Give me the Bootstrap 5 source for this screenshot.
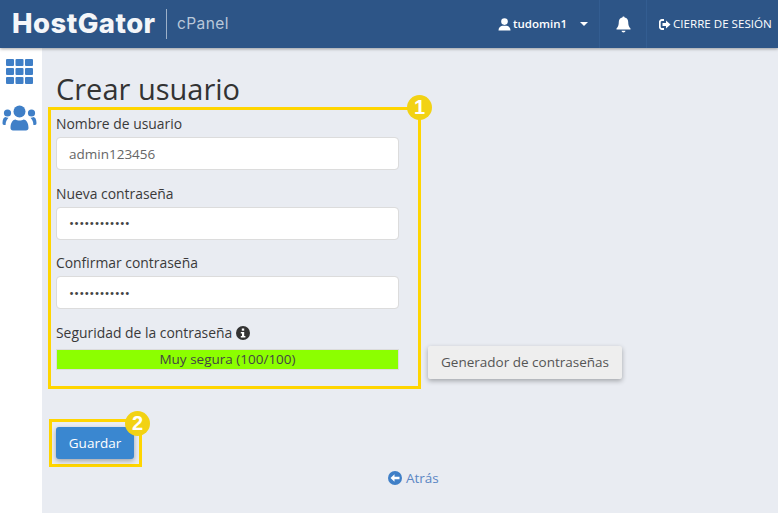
<!DOCTYPE html>
<html lang="es">
<head>
  <meta charset="UTF-8">
  <meta name="viewport" content="width=device-width, initial-scale=1">
  <title>Crear usuario</title>
  <link href="https://cdn.jsdelivr.net/npm/bootstrap@5.3.2/dist/css/bootstrap.min.css" rel="stylesheet">
  <style>
    html, body {
      height: 513px;
      overflow: hidden;
    }
    body {
      background-color: #e9ecf2;
      font-family: "Open Sans", sans-serif;
      font-size: 13.5px;
      color: #333;
    }
    .top-bar {
      height: 48px;
      background-color: #2d5587;
      box-shadow: 0 1px 3px rgba(0,0,0,0.35);
      position: relative;
      z-index: 2;
    }
    .brand-name {
      font-family: "Inter", sans-serif;
      font-weight: 800;
      font-size: 27.5px;
      letter-spacing: 0.45px;
      color: #f4f6f9;
      margin-left: 12px;
      width: 144px;
      line-height: 1;
    }
    .brand-rule {
      width: 1px;
      height: 30px;
      background: #9db1c9;
      margin-left: 10px;
    }
    .brand-sub {
      font-family: "Inter", sans-serif;
      font-size: 15.5px;
      color: #b9c8da;
      margin-left: 10px;
      letter-spacing: 0.4px;
    }
    .top-item {
      height: 48px;
      color: #fff;
      display: flex;
      align-items: center;
    }
    .top-user { width: 119px; padding-left: 18px; font-weight: 600; font-size: 11.5px; }
    .top-user svg { margin-right: 2px; }
    .top-bell { width: 48px; justify-content: center; border-left: 1px solid #335d91; border-right: 1px solid #335d91; }
    .top-exit { width: 131px; padding-left: 12px; font-size: 11.6px; font-weight: 500; white-space: nowrap; }
    .top-exit svg { margin-right: 2px; }
    .caret-mark {
      width: 0;
      height: 0;
      border-left: 4px solid transparent;
      border-right: 4px solid transparent;
      border-top: 4px solid #fff;
      margin-left: 13px;
    }
    .page-body {
      height: 465px;
    }
    .side-rail {
      width: 42px;
      background: #fff;
      padding-top: 11px;
      padding-left: 2px;
    }
    .side-rail svg { display: block; }
    .side-people { margin-top: 21px; }
    .main-pane {
      padding: 0 0 0 6px;
    }
    .page-title {
      font-family: "Open Sans", sans-serif;
      font-size: 29px;
      font-weight: 400;
      line-height: 40px;
      color: #333;
      margin: 21px 0 -2px 8px;
    }
    .mark-box {
      position: relative;
      border: 3px solid #ffd500;
    }
    .form-box {
      width: 373px;
      height: 282px;
      padding: 4px 19px 0 5px;
    }
    .save-box {
      width: 93px;
      height: 48px;
      margin: 30px 0 0 1px;
      padding: 5px 0 0 4px;
    }
    .num-dot {
      position: absolute;
      width: 25px;
      height: 25px;
      border-radius: 50%;
      background: #f2d214;
      color: #fff;
      font-family: "Liberation Sans", sans-serif;
      font-weight: 700;
      font-size: 20px;
      line-height: 25px;
      text-align: center;
    }
    .form-box .num-dot { top: -15px; right: -14px; }
    .save-box .num-dot { top: -11px; right: -11px; }
    .field-label {
      display: block;
      font-size: 13.9px;
      font-weight: 500;
      line-height: 19px;
      margin-bottom: 4px;
      color: #3a3a3a;
    }
    .field-wrap { margin-bottom: 13.5px; }
    .field-input {
      height: 33px;
      width: 343px;
      border: 1px solid #dcdcdc;
      border-radius: 4px;
      padding: 0 12px;
      font-family: "Open Sans", sans-serif;
      font-size: 13.5px;
      color: #666;
      box-shadow: none;
    }
    input[type=password].field-input { color: #444; }
    .strength-label { margin-bottom: 7.5px; }
    .info-mark { vertical-align: -2px; }
    .strength-track {
      width: 343px;
      height: 21px;
      background: #8cff00;
      border: 1px solid #dcdcdc;
      text-align: center;
      font-size: 13.5px;
      line-height: 18px;
      color: #444;
    }
    .gen-btn {
      background: #eee;
      color: #555;
      font-size: 13.5px;
      border: 0;
      border-radius: 2px;
      width: 194px;
      height: 33px;
      padding: 0;
      margin: 0 0 10px 7px;
      box-shadow: 0 2px 5px rgba(0,0,0,0.3);
    }
    .save-btn {
      background: #3a87d0;
      color: #fff;
      font-size: 13.5px;
      border: 0;
      border-radius: 3px;
      width: 78px;
      height: 32px;
      padding: 0;
      box-shadow: 0 2px 5px rgba(0,0,0,0.3);
    }
    .back-link {
      color: #5b86c4;
      font-size: 13.5px;
      text-decoration: none;
      margin: 1px 0 0 340px;
      line-height: 20px;
    }
  </style>
</head>
<body>

  <nav class="top-bar d-flex align-items-center justify-content-between">
    <div class="d-flex align-items-center">
      <span class="brand-name">HostGator</span>
      <span class="brand-rule"></span>
      <span class="brand-sub">cPanel</span>
    </div>
    <div class="d-flex">
      <div class="top-item top-user">
        <svg width="13" height="13" viewBox="0 0 13 13"><circle cx="6.5" cy="3.6" r="3.3" fill="#fff"/><path d="M0.5 12.5c0-3 1.8-4.4 3.8-4.8h4.4c2 .4 3.8 1.8 3.8 4.8z" fill="#fff"/></svg>
        tudomin1
        <span class="caret-mark"></span>
      </div>
      <div class="top-item top-bell">
        <svg width="15" height="17" viewBox="0 0 15 17"><path d="M7.5 0.5c.7 0 1.1.4 1.1 1 2.4.5 3.6 2.3 3.6 4.6 0 3.2.7 4.7 2.3 6.4v1H.5v-1c1.600-1.700 2.300-3.200 2.300-6.400 0-2.300 1.200-4.100 3.600-4.600 0-.6.400-1 1.100-1z" fill="#fff"/><path d="M5.600 14.800h3.800c0 1-.9 1.700-1.900 1.700s-1.900-.7-1.900-1.700z" fill="#fff"/></svg>
      </div>
      <div class="top-item top-exit">
        <svg width="12" height="11" viewBox="0 0 12 11" class="flex-shrink-0"><path d="M5 1H3a2.200 2.200 0 0 0-2.200 2.200v4.600A2.200 2.200 0 0 0 3 10h2" fill="none" stroke="#fff" stroke-width="1.800"/><path d="M3.500 4h3.500V1.500l4.500 4-4.500 4V7H3.500z" fill="#fff"/></svg>
        CIERRE DE SESIÓN
      </div>
    </div>
  </nav>

  <div class="page-body d-flex">
    <aside class="side-rail flex-shrink-0">
      <svg width="36" height="25" viewBox="0 0 36 25" class="ms-1" fill="#3f7fc7">
        <rect x="0" y="0" width="8" height="7" rx="1"/><rect x="9.500" y="0" width="8" height="7" rx="1"/><rect x="19" y="0" width="8" height="7" rx="1"/>
        <rect x="0" y="9" width="8" height="7" rx="1"/><rect x="9.500" y="9" width="8" height="7" rx="1"/><rect x="19" y="9" width="8" height="7" rx="1"/>
        <rect x="0" y="18" width="8" height="7" rx="1"/><rect x="9.500" y="18" width="8" height="7" rx="1"/><rect x="19" y="18" width="8" height="7" rx="1"/>
      </svg>
      <svg width="36" height="26" viewBox="0 0 36 26" class="side-people" fill="#3f7fc7">
        <circle cx="17.500" cy="6.500" r="6"/>
        <circle cx="5.500" cy="8" r="3.600"/>
        <circle cx="29.500" cy="8" r="3.600"/>
        <path d="M8.500 23c0-5.500 2.500-8.500 5-8.500 1 .6 2.400 1 4 1s3-.4 4-1c2.500 0 5 3 5 8.500 0 1.500-1 2.500-2.500 2.500h-13c-1.500 0-2.500-1-2.500-2.500z"/>
        <path d="M0.500 18c0-4 1.500-6 3-6 1 .6 2 .8 3 .7-.5.800-1 1.300-1.500 2-1 1.700-1.400 3.500-1.400 5.300H2c-1 0-1.500-1-1.500-2z"/>
        <path d="M34.500 18c0-4-1.500-6-3-6-1 .6-2 .8-3 .7.500.8 1 1.300 1.500 2 1 1.700 1.400 3.500 1.400 5.300H33c1 0 1.500-1 1.500-2z"/>
      </svg>
    </aside>

    <main class="main-pane flex-grow-1">
      <h1 class="page-title">Crear usuario</h1>

      <div class="d-flex align-items-end">
        <form class="mark-box form-box flex-shrink-0">
          <span class="num-dot">1</span>
          <div class="field-wrap">
            <label class="field-label" for="user">Nombre de usuario</label>
            <input class="form-control field-input" id="user" type="text" value="admin123456">
          </div>
          <div class="field-wrap">
            <label class="field-label" for="pass">Nueva contraseña</label>
            <input class="form-control field-input" id="pass" type="password" value="admin1234567">
          </div>
          <div class="field-wrap">
            <label class="field-label" for="pass2">Confirmar contraseña</label>
            <input class="form-control field-input" id="pass2" type="password" value="admin1234567">
          </div>
          <div>
            <label class="field-label strength-label">Seguridad de la contraseña
              <svg width="14" height="14" viewBox="0 0 14 14" class="info-mark"><circle cx="7" cy="7" r="7" fill="#333"/><rect x="5.800" y="2.500" width="2.400" height="2.200" fill="#fff"/><path d="M4.800 6h3.400v4h1.200v1.500H4.800V10H6V7.500H4.800z" fill="#fff"/></svg>
            </label>
            <div class="strength-track">Muy segura (100/100)</div>
          </div>
        </form>
        <button type="button" class="btn gen-btn">Generador de contraseñas</button>
      </div>

      <div class="mark-box save-box">
        <span class="num-dot">2</span>
        <button type="button" class="btn save-btn">Guardar</button>
      </div>

      <a href="#" class="back-link d-inline-flex align-items-center gap-1">
        <svg width="14" height="14" viewBox="0 0 14 14"><circle cx="7" cy="7" r="7" fill="#3f7fc7"/><path d="M2.500 7l4-3.700v2.400h5v2.600h-5v2.400z" fill="#fff"/></svg>
        Atrás
      </a>
    </main>
  </div>

</body>
</html>
